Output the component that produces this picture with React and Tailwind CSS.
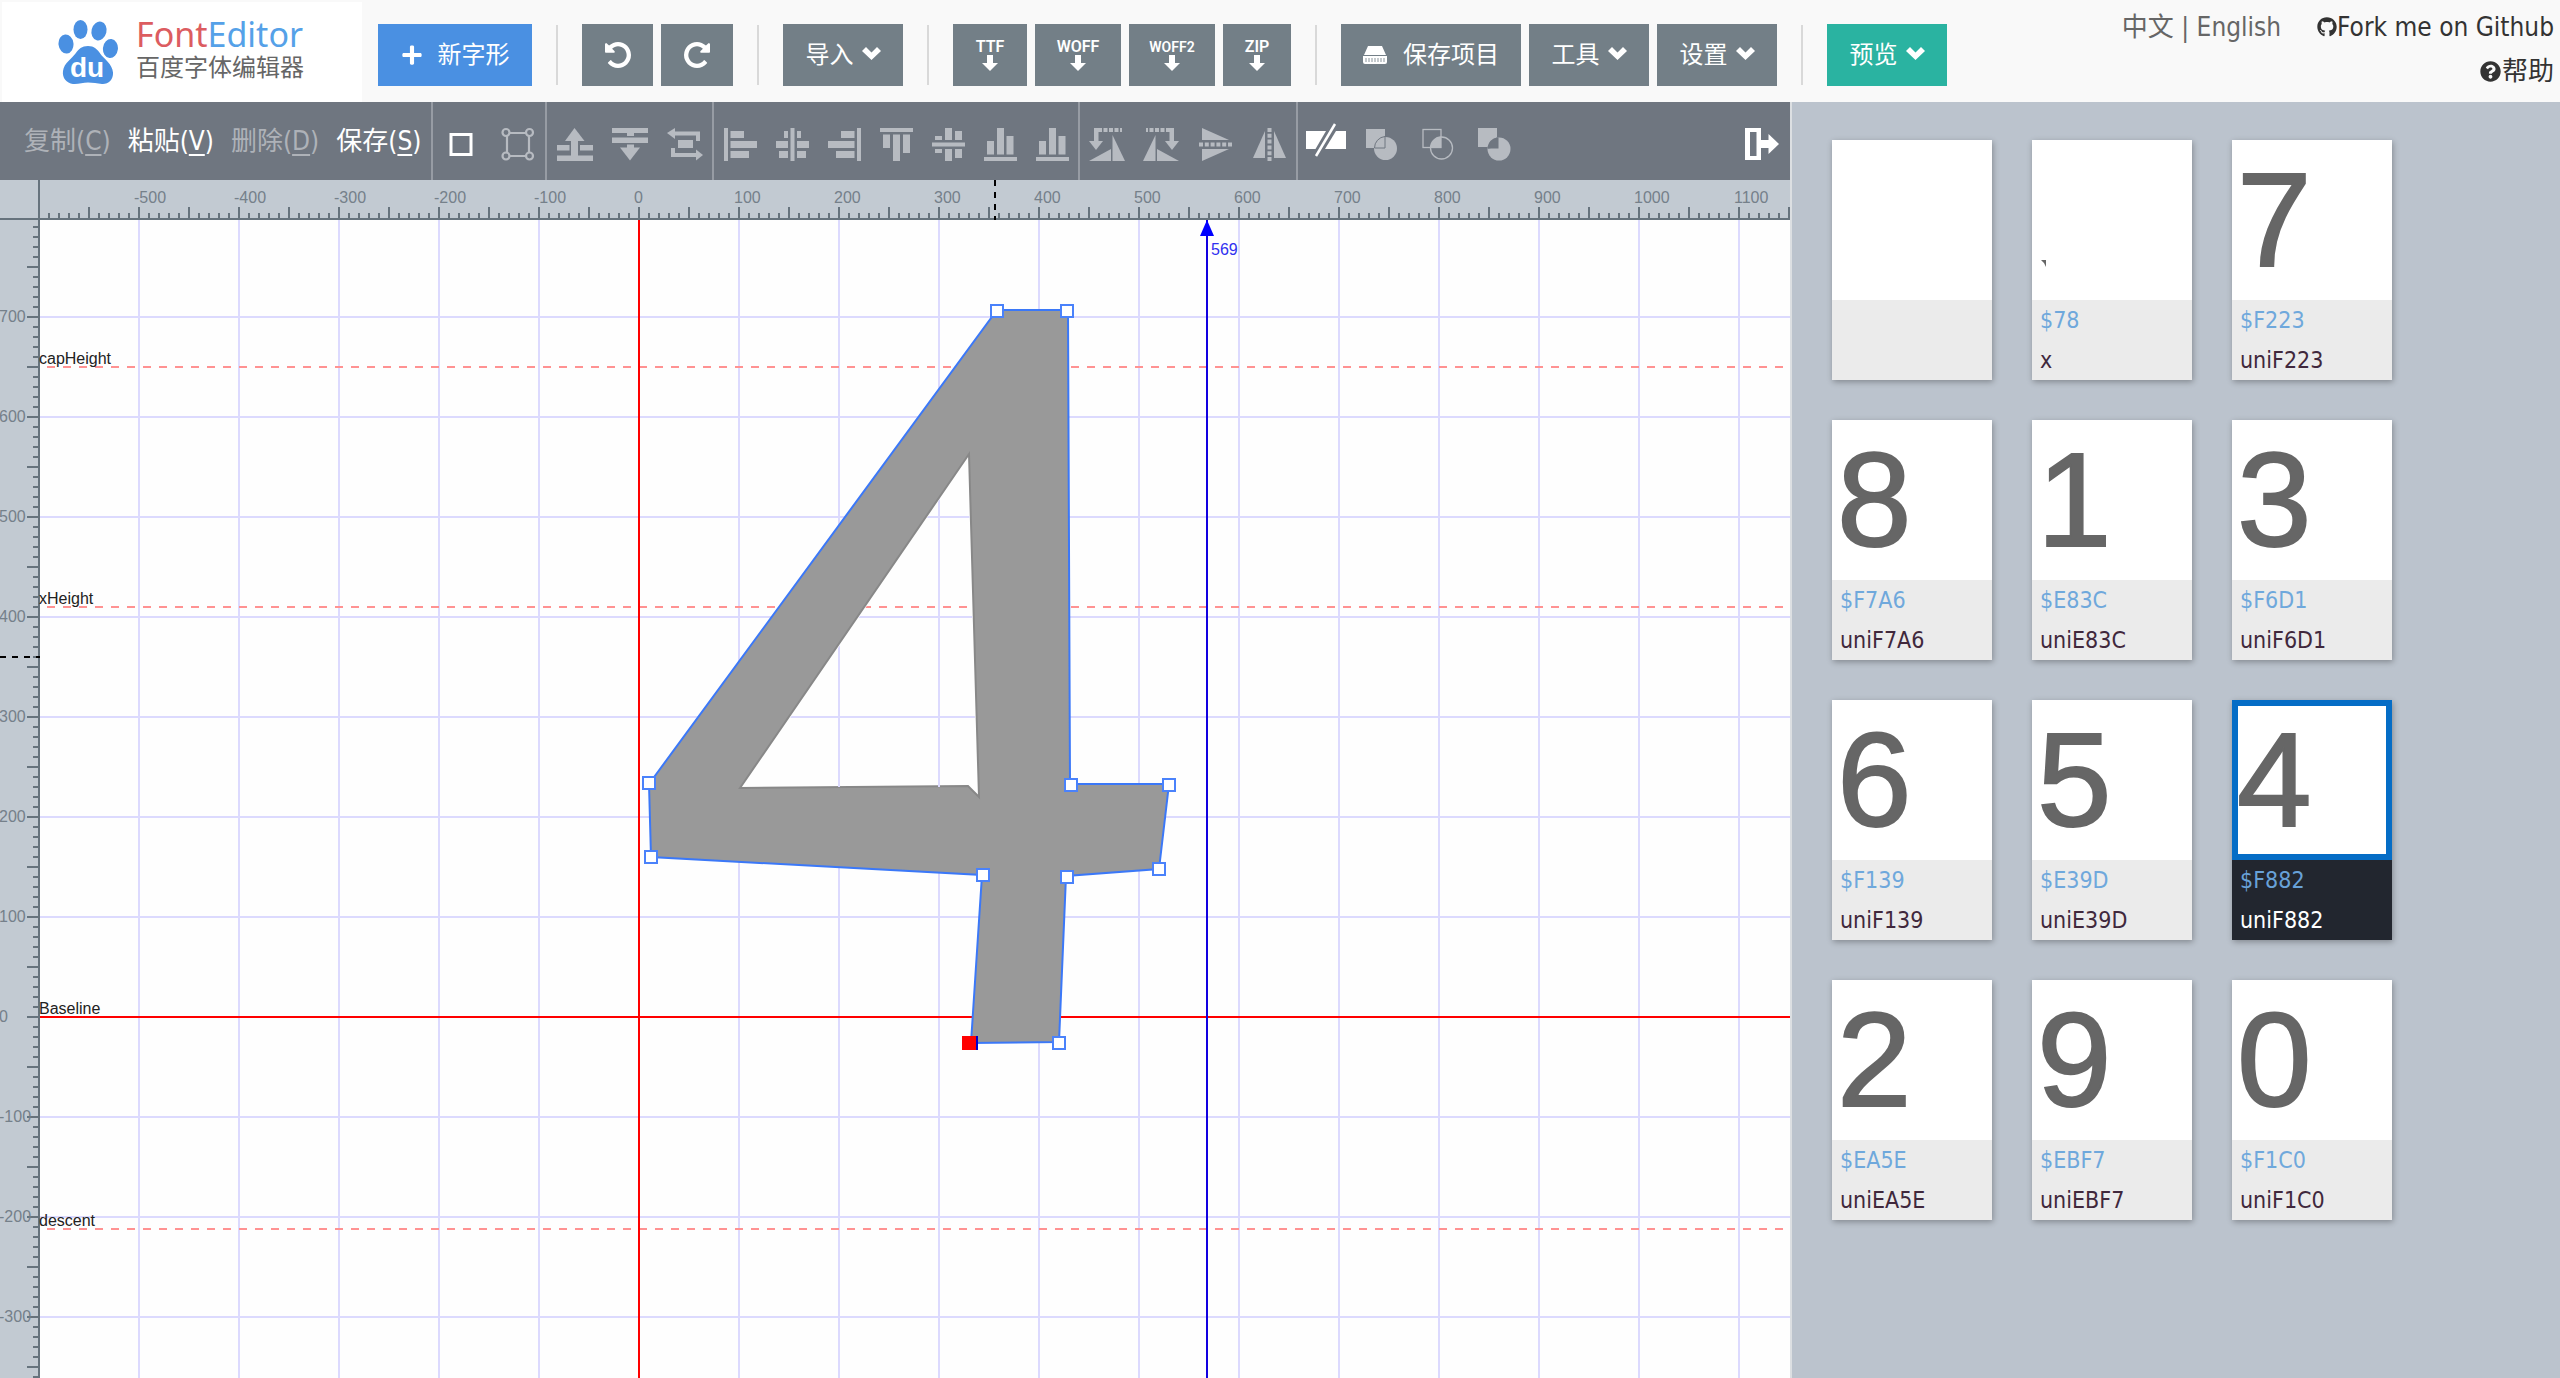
import { FaPlus, FaGithub, FaQuestionCircle } from "react-icons/fa";

const UI = "font-['DejaVu_Sans_Condensed','Noto_Sans','Noto_Sans_CJK_SC',sans-serif]";
const DARK = "#6f7680";

/* ---------- header ---------- */

function Logo() {
  return (
    <svg viewBox="0 0 60 66" className="h-[66px] w-[60px]" aria-hidden="true">
      <g fill="#4a90e2">
        <ellipse cx="8" cy="25" rx="7.5" ry="9.5" transform="rotate(-6 8 25)" />
        <ellipse cx="22.500" cy="10.500" rx="7" ry="9.500" />
        <ellipse cx="41" cy="12" rx="7.500" ry="9.500" transform="rotate(14 41 12)" />
        <ellipse cx="52.500" cy="29.500" rx="7.500" ry="9.500" transform="rotate(6 52 29)" />
        <path d="M30 27c6 0 9.500 3.500 12.500 8 3 4.500 12 10 12.500 18.500C55.500 61 50 65.500 44 65c-5-.5-9-1.500-14-1.500S20 65.500 15 65C8.500 64 4 59 5 52c1-8 9-12.500 12.500-17.500C20.500 30 24 27 30 27z" />
      </g>
      <text x="12" y="58" fill="#fff" fontSize="28" fontWeight="700" fontFamily="Liberation Sans, sans-serif">du</text>
    </svg>
  );
}

function Chevron() {
  return (
    <svg viewBox="0 0 19 13" className="mb-1 h-[13px] w-[19px]" fill="currentColor" aria-hidden="true">
      <path d="M4 0l5.500 5.500L15 0l4 4-9.500 9L0 4z" />
    </svg>
  );
}

function Rewind({ flip }) {
  return (
    <svg viewBox="0 128 1536 1536" className="size-[26px]" fill="currentColor" aria-hidden="true">
      <path
        transform={flip ? "translate(1536 0) scale(-1 1)" : undefined}
        d="M1536 896q0 156-61 298t-164 245-245 164-298 61q-172 0-327-72.500T177 1387q-7-10-6.500-22.500t8.500-20.500l137-138q10-9 25-9 16 2 23 12 73 95 179 147t225 52q104 0 198.500-40.500T1130 1258t109.500-163.500T1280 896t-40.500-198.500T1130 534 966.500 424.500 768 384q-98 0-188 35.500T420 521l137 138q31 30 14 69-17 40-59 40H64q-26 0-45-19T0 704V256q0-42 40-59 39-17 69 14l130 129q107-101 244.500-156.500T768 128q156 0 298 61t245 164 164 245 61 298z"
      />
    </svg>
  );
}

function Drive() {
  return (
    <svg viewBox="0 0 24 18" className="h-[18px] w-6" aria-hidden="true">
      <path fill="#fff" d="M5 0h14l4 9H1zM0 10h24v6q0 2-2 2H2q-2 0-2-2z" />
      <path stroke="#8b969d" strokeWidth="1" d="M3 12v4M6 12v4M9 12v4M12 12v4M15 12v4M18 12v4M21 12v4" />
    </svg>
  );
}

function HeaderButton({ className = "", children, ...rest }) {
  return (
    <button
      type="button"
      className={`flex h-[62px] shrink-0 items-center justify-center text-2xl whitespace-nowrap text-white ${className || "bg-[#737f87]"}`}
      {...rest}
    >
      {children}
    </button>
  );
}

const Divider = () => <span className="mx-4 h-[60px] w-0.5 shrink-0 bg-[#d9d9d9]" />;

function ExportButton({ label, className }) {
  return (
    <HeaderButton className={`flex-col bg-[#737f87] font-['Roboto',sans-serif] font-semibold ${className}`}>
      <span className="leading-4">{label}</span>
      <svg viewBox="0 0 16 16" className="h-4 w-4" fill="currentColor" aria-hidden="true">
        <path d="M5 0h6v8h5l-8 8-8-8h5z" />
      </svg>
    </HeaderButton>
  );
}

function MenuButton({ label, className = "bg-[#737f87]" }) {
  return (
    <HeaderButton className={`w-[120px] gap-2 ${className}`}>
      {label}
      <Chevron />
    </HeaderButton>
  );
}

function Header() {
  return (
    <header className="flex h-[102px] shrink-0 items-start bg-[#f9f9f9] pt-0.5 pl-0.5">
      <div className="flex h-[100px] w-[360px] shrink-0 items-center gap-[18px] bg-white pl-14">
        <Logo />
        <div className="flex flex-col pb-1">
          <span className="font-['Noto_Sans',sans-serif] text-[34px] leading-9 text-[#dc5c60]">
            Font<span className="text-[#55a1e8]">Editor</span>
          </span>
          <span className="text-2xl leading-8 text-[#666]">百度字体编辑器</span>
        </div>
      </div>
      <nav className="mt-[22px] ml-4 flex items-center gap-2">
        <HeaderButton className="w-[154px] gap-[15px] bg-[#4a90e2]">
          <FaPlus className="size-[22px]" />
          新字形
        </HeaderButton>
        <Divider />
        <HeaderButton className="w-[71px] bg-[#737f87]" aria-label="undo"><Rewind /></HeaderButton>
        <HeaderButton className="w-[72px] bg-[#737f87]" aria-label="redo"><Rewind flip /></HeaderButton>
        <Divider />
        <MenuButton label="导入" />
        <Divider />
        <ExportButton label="TTF" className="w-[74px] text-base" />
        <ExportButton label="WOFF" className="w-[86px] text-base" />
        <ExportButton label="WOFF2" className="w-[86px] text-sm" />
        <ExportButton label="ZIP" className="w-[68px] text-base" />
        <Divider />
        <HeaderButton className="w-[180px] gap-4 bg-[#737f87]"><Drive />保存项目</HeaderButton>
        <MenuButton label="工具" />
        <MenuButton label="设置" />
        <Divider />
        <MenuButton label="预览" className="bg-[#2ab3a1]" />
      </nav>
      <div className="ml-auto flex flex-col items-end pt-[3px] pr-[6px] text-[26px] leading-[44px] whitespace-nowrap text-[#333]">
        <div className="flex">
          <span className="mr-9 text-[#666]">
            <a href="#zh">中文</a> | <a href="#en">English</a>
          </span>
          <a href="#github" className="flex items-center"><FaGithub className="size-5" />Fork me on Github</a>
        </div>
        <a href="#help" className="flex items-center gap-px"><FaQuestionCircle className="size-[21px]" />帮助</a>
      </div>
    </header>
  );
}

/* ---------- glyph toolbar ---------- */

const Tri = ({ p }) => <polygon points={p} />;
const Bar = ({ r: [x, y, w, h] }) => <rect x={x} y={y} width={w} height={h} />;
const Bars = ({ list }) => list.map((r, i) => <Bar key={i} r={r} />);
const swap = (list) => list.map(([x, y, w, h]) => [y, x, h, w]);
const mirror = "translate(33 0) scale(-1 1)";

const LEFT = [[0, 0, 4, 33], [6.5, 3, 13.5, 7], [6.5, 13, 26.5, 7], [6.5, 23, 18.5, 7]];
const CENTER = [[14.5, 0, 4, 33], [8, 3, 4, 7], [21, 3, 4, 7], [0, 13, 12, 7], [21, 13, 12, 7], [3, 23, 9, 7], [21, 23, 9, 7]];
const BOTTOM = [[0, 29, 33, 4], [3, 13, 7, 13.5], [13, 0, 7, 26.5], [22.5, 8, 7, 18.5]];
const ROTATE = (
  <>
    <path d="M9 2H33" stroke="currentColor" strokeWidth="4" strokeDasharray="4 1.500" />
    <Bar r={[5, 0, 4.5, 14]} />
    <Tri p="0,13 14,13 7,22" />
    <Tri p="23.500,7 36,33 23.500,33" />
    <Tri p="22,21 22,33 0,33" />
  </>
);
const INTERSECTION = "M19 20V8.500A11.500 11.500 0 0 0 8.500 20z";

const ICONS = {
  rect: <rect x="8" y="6.500" width="20" height="20" fill="none" stroke="currentColor" strokeWidth="3" />,
  points: (
    <g fill="none" stroke="currentColor" strokeWidth="2.200">
      <path d="M6 8V24M28 8V24M9 5H25M9 28H25" />
      <circle cx="5" cy="4.500" r="3.500" /><circle cx="28.500" cy="4.500" r="3.500" />
      <circle cx="5" cy="28" r="3.500" /><circle cx="28.500" cy="28" r="3.500" />
    </g>
  ),
  raise: <><Tri p="17.500,0 27.500,13 8,13" /><Bars list={[[14, 12, 7, 16], [0, 17, 12.5, 5.5], [23, 17, 13, 5.5], [0, 27.5, 36, 5.5]]} /></>,
  lower: <><Bars list={[[0, 0, 36, 5], [15, 5, 7, 3], [0, 9.5, 36, 5.5], [15, 16.5, 7, 4]]} /><Tri p="8,19.500 28,19.500 18,32.500" /></>,
  swap: <><Tri p="0,5 8,0 8,11" /><path d="M8 3.500H33V13H29V7.500H8zM4 20H8V25H29V29H4z" /><Bar r={[11, 12, 15, 8]} /><Tri p="29,21.500 36,27 29,32.500" /></>,
  left: <Bars list={LEFT} />,
  center: <Bars list={CENTER} />,
  right: <g transform={mirror}><Bars list={LEFT} /></g>,
  top: <Bars list={swap(LEFT)} />,
  middle: <Bars list={swap(CENTER)} />,
  bottom: <Bars list={BOTTOM} />,
  rotL: ROTATE,
  rotR: <g transform="translate(36 0) scale(-1 1)">{ROTATE}</g>,
  flip: <><Tri p="3,0 30,12 3,12" /><Tri p="3,21 30,21 3,33" /><path d="M0 16.500H33" stroke="currentColor" strokeWidth="4" strokeDasharray="4 1.800" /></>,
  mirror: <><Tri p="0,30 12,3 12,30" /><Tri p="33,30 21,3 21,30" /><path d="M16.500 0V33" stroke="currentColor" strokeWidth="4" strokeDasharray="4 1.800" /></>,
  split: <><Tri p="-2,3 18,3 7.500,21 -2,21" /><Tri p="28,3 38,3 38,21 17,21" /><path d="M27 -4L8 28" stroke="currentColor" strokeWidth="2.500" /></>,
  union: <><Bar r={[0, 1, 19, 19]} /><circle cx="19.500" cy="20.500" r="11.500" /><path d={INTERSECTION} fill="none" stroke={DARK} /></>,
  intersect: (
    <>
      <g fill="none" stroke="currentColor" strokeWidth="1.300"><rect x="1" y="1.500" width="18" height="18" /><circle cx="19.500" cy="20" r="11" /></g>
      <path d={INTERSECTION} />
    </>
  ),
  exclude: <><Bar r={[0, 0, 19, 19]} /><circle cx="21" cy="21" r="11.500" /><path d="M19 19V9.500A11.500 11.500 0 0 0 10 20.500L10.500 20.500z" fill={DARK} /><path d="M19 9.500A12 12 0 0 0 9.500 19V20.500H20.500V9.500z" fill={DARK} /></>,
  exit: <><path fillRule="evenodd" d="M0 0H16V32H0zM5 4V28H11.500V4z" /><Bar r={[13, 12, 11, 8]} /><Tri p="23.500,6 34,16 23.500,26" /></>,
};

function Tool({ name, active, width = "w-14" }) {
  const wide = ["raise", "lower", "swap", "rotL", "rotR", "rect", "split", "exit"].includes(name);
  return (
    <button type="button" aria-label={name} className={`flex h-full items-center justify-center pt-2 ${width} ${active ? "text-white" : "text-[#b7bbc1]"}`}>
      <svg viewBox={wide ? "0 0 36 34" : "0 0 33 34"} className={`h-[34px] overflow-visible ${wide ? "w-9" : "w-[33px]"}`} fill="currentColor" aria-hidden="true">
        {ICONS[name]}
      </svg>
    </button>
  );
}

const Group = ({ children }) => <div className="flex h-full items-center border-r-2 border-[#979ca4]">{children}</div>;

const COMMANDS = [
  ["复制", "C", false],
  ["粘贴", "V", true],
  ["删除", "D", false],
  ["保存", "S", true],
];

function Toolbar() {
  return (
    <div className="flex h-[78px] shrink-0 items-center overflow-hidden bg-[#6f7680]">
      <Group>
        <div className="flex gap-[17px] pr-[10px] pl-6">
          {COMMANDS.map(([name, key, on]) => (
            <button key={key} type="button" className={`text-[26px] whitespace-nowrap ${on ? "text-white" : "text-[#aeb2b8]"}`}>
              {name}(<span className="underline underline-offset-4">{key}</span>)
            </button>
          ))}
        </div>
      </Group>
      <Group><Tool name="rect" active /><Tool name="points" /></Group>
      <Group>{["raise", "lower", "swap"].map((n) => <Tool key={n} name={n} width="w-[55px]" />)}</Group>
      <Group>{["left", "center", "right", "top", "middle", "bottom"].map((n) => <Tool key={n} name={n} width="w-13" />)}<Tool name="bottom" width="w-13" /></Group>
      <Group>{["rotL", "rotR", "flip", "mirror"].map((n) => <Tool key={n} name={n} width="w-[54px]" />)}</Group>
      <Tool name="split" active />
      {["union", "intersect", "exclude"].map((n) => <Tool key={n} name={n} />)}
      <div className="ml-auto h-full"><Tool name="exit" active width="w-[54px]" /></div>
    </div>
  );
}

/* ---------- glyph canvas ---------- */

const OX = 639;
const OY = 837;
const range = (from, to, step) => Array.from({ length: Math.floor((to - from) / step) + 1 }, (_, i) => from + i * step);

const OUTLINE = "997,310 1068,310 1070,784 1169,784 1159,869 1066,876 1059,1042 971,1043 982,875 651,857 649,784";
const COUNTER = "969,454 979,797 968,786 740,788";
const HANDLES = [[997, 311], [1067, 311], [1071, 785], [1169, 785], [1159, 869], [1067, 877], [1059, 1043], [983, 875], [651, 857], [649, 783]];
const METRICS = [["capHeight", 187], ["xHeight", 427], ["descent", 1049]];

function Canvas() {
  return (
    <svg className="min-h-[600px] w-full flex-1 bg-[#fefefe]" fontFamily="Liberation Sans, Arial, sans-serif" fontSize="16" role="img" aria-label="glyph uniF882">
      <g fill="#dcdafe">
        {range(-500, 3000, 100).map((v) => <rect key={v} x={OX + v - 1} y="40" width="2" height="3000" />)}
        {range(-2000, 700, 100).map((v) => <rect key={v} x="40" y={OY - v - 1} width="4000" height="2" />)}
      </g>
      <path d={METRICS.map(([, y]) => `M47 ${y}H4000`).join("")} stroke="#ff9292" strokeWidth="2" strokeDasharray="8 8" />
      <rect x="40" y={OY - 1} width="4000" height="2" fill="#f00" />
      <rect x={OX - 1} y="40" width="2" height="3000" fill="#f00" />
      <g transform="translate(0 -180)">
        <polygon points={OUTLINE} fill="#999" stroke="#3b78f8" strokeWidth="2" />
        <polygon points={COUNTER} fill="#fefefe" stroke="#888" strokeWidth="2" />
      </g>
      <svg x="742" y="275" width="240" height="345" viewBox="742 455 240 345">
        <clipPath id="counter"><polygon points="968,458 977,795 968,787 743,787" /></clipPath>
        <g clipPath="url(#counter)">
          <g fill="#dcdafe">
            <rect x="838" y="454" width="2" height="350" /><rect x="938" y="454" width="2" height="350" />
            <rect x="740" y="516" width="240" height="2" /><rect x="740" y="616" width="240" height="2" /><rect x="740" y="716" width="240" height="2" />
          </g>
          <path d="M47 607H1100" stroke="#ff9292" strokeWidth="2" strokeDasharray="8 8" />
        </g>
      </svg>
      <g fill="#fff" stroke="#4a82fb" strokeWidth="2">
        {HANDLES.map(([x, y]) => <rect key={`${x}-${y}`} x={x - 6} y={y - 186} width="12" height="12" />)}
      </g>
      <rect x="976" y="856" width="2" height="14" fill="#00c" />
      <rect x="962" y="856" width="14" height="14" fill="#f00" />
      <rect x="1206" y="40" width="2" height="3000" fill="#1200e0" />
      <polygon points="1207,40 1214,56 1200,56" fill="#00f" />
      <text x="1211" y="75" fill="#3030f0">569</text>

      <path d="M0 0H4000V40H40V3000H0z" fill="#c2cad2" />
      <g fill="#66737d">
        <rect x="0" y="38" width="4000" height="2" />
        <rect x="38" y="0" width="2" height="3000" />
        {range(-590, 2500, 10).map((v) => <rect key={v} x={OX + v - 1} y={v % 50 ? 33 : 27} width="2" height={v % 50 ? 5 : 11} />)}
        {range(-1500, 790, 10).map((v) => <rect key={v} y={OY - v - 1} x={v % 50 ? 33 : 27} height="2" width={v % 50 ? 5 : 11} />)}
      </g>
      <g fill="#75808a">
        {range(-500, 1100, 100).map((v) => <text key={v} x={OX + v - 5} y="23">{v}</text>)}
        {range(-300, 700, 100).map((v) => <text key={v} x="-1" y={OY - v + 5}>{v}</text>)}
      </g>
      <path d="M995 0V40M0 477H40" stroke="#000" strokeWidth="2" strokeDasharray="6 6" />
      <g fill="#222">
        {METRICS.map(([name, y]) => <text key={name} x="39" y={y - 3}>{name}</text>)}
        <text x="39" y={OY - 3}>Baseline</text>
      </g>
    </svg>
  );
}

/* ---------- glyph list ---------- */

const GLYPHS = [
  { shape: "", code: "", name: "" },
  { shape: "mark", code: "$78", name: "x" },
  { shape: "7", code: "$F223", name: "uniF223" },
  { shape: "8", code: "$F7A6", name: "uniF7A6" },
  { shape: "1", code: "$E83C", name: "uniE83C" },
  { shape: "3", code: "$F6D1", name: "uniF6D1" },
  { shape: "6", code: "$F139", name: "uniF139" },
  { shape: "5", code: "$E39D", name: "uniE39D" },
  { shape: "4", code: "$F882", name: "uniF882", selected: true },
  { shape: "2", code: "$EA5E", name: "uniEA5E" },
  { shape: "9", code: "$EBF7", name: "uniEBF7" },
  { shape: "0", code: "$F1C0", name: "uniF1C0" },
];

function GlyphCard({ shape, code, name, selected }) {
  return (
    <li className="w-40 shadow-[1px_2px_6px_rgba(0,0,0,0.3)]">
      <div className={`flex h-40 items-start pl-[5px] ${selected ? "bg-white inset-ring-6 inset-ring-[#056dc6]" : "bg-white"}`}>
        {shape === "mark" ? (
          <svg viewBox="0 0 5 7" className="mt-[120px] ml-1 h-[7px] w-[5px]" fill="#666"><path d="M0 0H5V7L3 3z" /></svg>
        ) : (
          <span className="font-['Liberation_Sans',sans-serif] text-[134px] leading-[160px] text-[#666] [-webkit-text-stroke:2px_#666]">{shape}</span>
        )}
      </div>
      <div className={`h-20 px-2 text-[23px] leading-10 ${selected ? "bg-[#22262f] text-white" : "bg-[#ebebeb] text-[#40283c]"}`}>
        <p className={selected ? "text-[#68a1d8]" : "text-[#6fa8dc]"}>{code}</p>
        <p>{name}</p>
      </div>
    </li>
  );
}

export default function App() {
  return (
    <div className={`flex h-screen flex-col overflow-hidden ${UI}`}>
      <Header />
      <div className="flex min-h-0 flex-1">
        <main className="flex w-[70%] flex-col border-r-2 border-[#dcdfe2]">
          <Toolbar />
          <Canvas />
        </main>
        <ul className="flex flex-1 flex-wrap content-start gap-10 overflow-hidden bg-[#bbc3cd] pt-[38px] pr-20 pl-10">
          {GLYPHS.map((g, i) => <GlyphCard key={i} {...g} />)}
        </ul>
      </div>
    </div>
  );
}
